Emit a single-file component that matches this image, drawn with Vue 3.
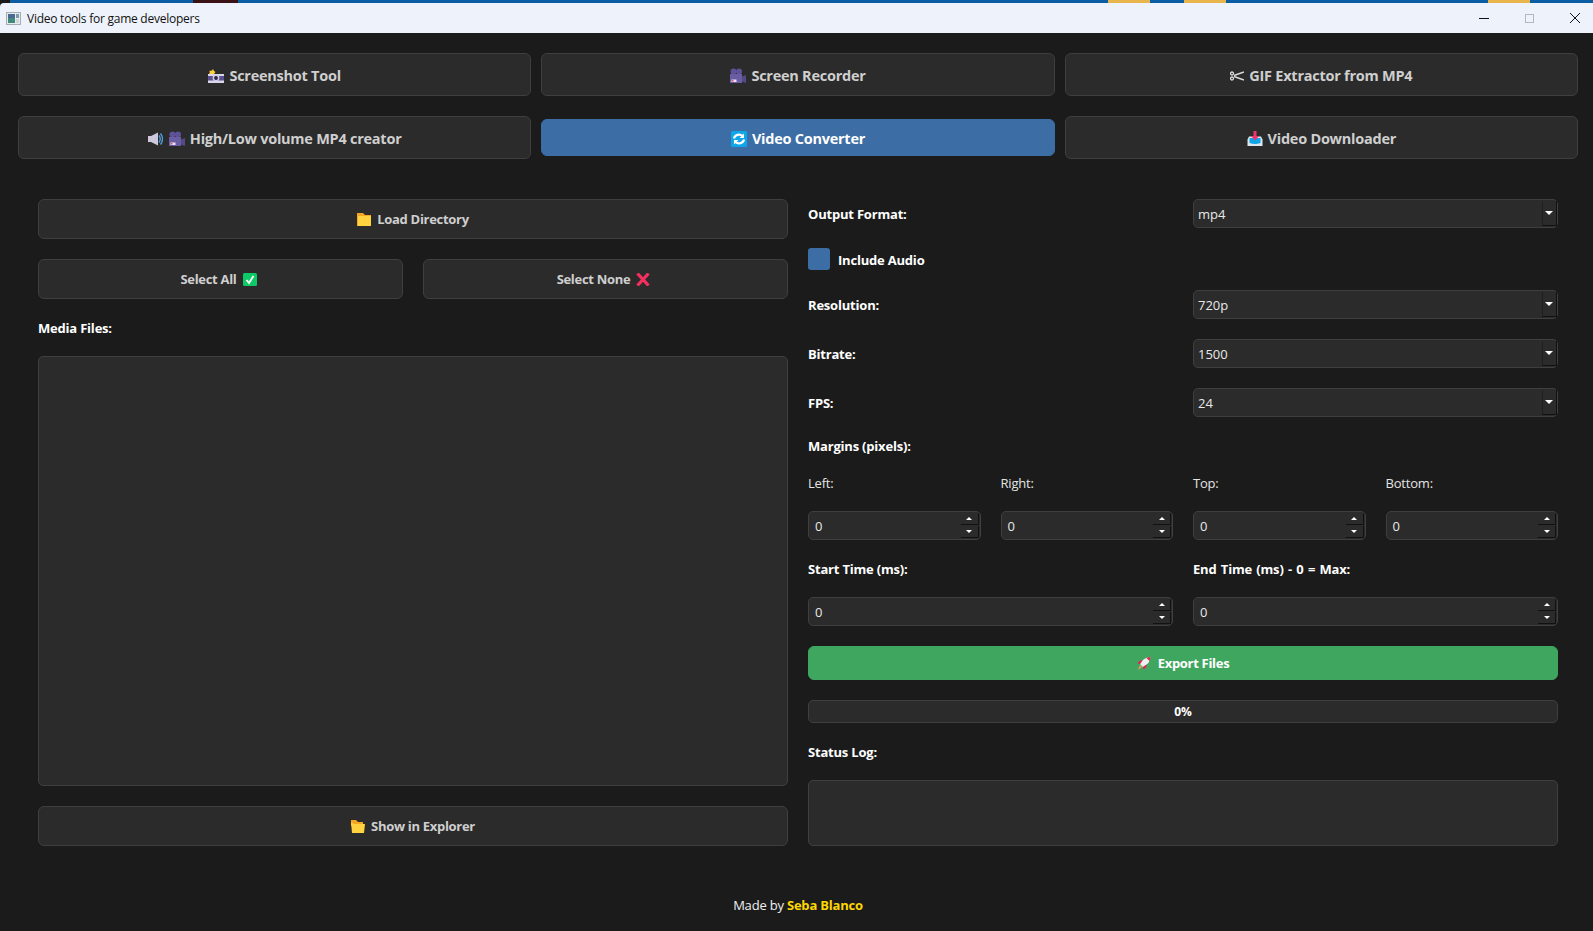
<script setup>
// fila de pestañas, los iconos van en el template
const margins = ["Left:", "Right:", "Top:", "Bottom:"];
const combos = [
  { label: "Resolution:", value: "720p" },
  { label: "Bitrate:", value: "1500" },
  { label: "FPS:", value: "24" },
];
const times = ["Start Time (ms):", "End Time (ms) - 0 = Max:"];
</script>

<template>
  <div class="window">
    <div class="strip"></div>
    <div class="titlebar">
      <svg class="app-icon" viewBox="0 0 15 13">
        <rect x="0.5" y="0.5" width="14" height="12" fill="#e6ebee" stroke="#a5adb2" />
        <rect x="2" y="2" width="7" height="9" fill="#3f8a7c" />
        <rect x="2" y="2" width="7" height="4" fill="#4a6a96" />
        <rect x="10" y="2" width="3" height="4" fill="#7f9aa8" />
        <rect x="10" y="7" width="3" height="4" fill="#cfd6da" />
      </svg>
      <span class="title">Video tools for game developers</span>
      <div class="win-buttons">
        <svg viewBox="0 0 10 10" width="10" height="10"><path d="M0 5.500h10" stroke="#111" stroke-width="1" /></svg>
        <svg viewBox="0 0 9 9" width="9" height="9"><rect x="0.500" y="0.500" width="8" height="8" fill="none" stroke="#b4b7bb" /></svg>
        <svg viewBox="0 0 10 10" width="10" height="10"><path d="M0 0l10 10M10 0L0 10" stroke="#111" stroke-width="1" /></svg>
      </div>
    </div>

    <div class="page">
      <div class="tabs">
        <button class="btn tab">
          <svg class="ico" viewBox="0 0 16 16">
            <path d="M0 6h16v9H0z" fill="#d9d6ea" />
            <path d="M0 8h16v4.500H0z" fill="#5b5190" />
            <circle cx="8" cy="10" r="3.400" fill="#cfcbe4" />
            <circle cx="8" cy="10" r="1.900" fill="#2a2644" />
            <path d="M1 6l1-2-1-1 3-.5L5 1l1 2 1.500 1L6 6z" fill="#ffcf33" />
          </svg>
          Screenshot Tool
        </button>
        <button class="btn tab">
          <svg class="ico" viewBox="0 0 16 16">
            <circle cx="3.500" cy="3.500" r="3" fill="#5f5299" />
            <circle cx="9" cy="3.500" r="3" fill="#5f5299" />
            <path d="M0 6h12v9H0z" fill="#6a5da3" />
            <path d="M12 8.500l4-1.500v8l-4-1.500z" fill="#544a86" />
            <path d="M1.500 11.500h5V14h-5z" fill="#e8e2f2" />
            <path d="M2 12h1.500v1.500H2z" fill="#e8476f" />
          </svg>
          Screen Recorder
        </button>
        <button class="btn tab">
          <svg class="ico scissors" viewBox="0 0 14 10">
            <path d="M4 4.500L14 1M4 5.500L14 9" stroke="#dcdcdc" stroke-width="1.400" fill="none" />
            <circle cx="2" cy="2.500" r="1.500" fill="none" stroke="#dcdcdc" stroke-width="1.300" />
            <circle cx="2" cy="7.500" r="1.500" fill="none" stroke="#dcdcdc" stroke-width="1.300" />
          </svg>
          GIF Extractor from MP4
        </button>
        <button class="btn tab">
          <svg class="ico speaker" viewBox="0 0 15 16">
            <path d="M0 5h3l7-3.500v13L3 11H0z" fill="#cdc8da" />
            <path d="M11 4.500q2.500 3.500 0 7M12.500 2.500q4 5.500 0 11" stroke="#4f9fe0" stroke-width="1.300" fill="none" />
          </svg>
          <svg class="ico" viewBox="0 0 16 16">
            <circle cx="3.500" cy="3.500" r="3" fill="#5f5299" />
            <circle cx="9" cy="3.500" r="3" fill="#5f5299" />
            <path d="M0 6h12v9H0z" fill="#6a5da3" />
            <path d="M12 8.500l4-1.500v8l-4-1.500z" fill="#544a86" />
            <path d="M1.500 11.500h5V14h-5z" fill="#e8e2f2" />
            <path d="M2 12h1.500v1.500H2z" fill="#e8476f" />
          </svg>
          High/Low volume MP4 creator
        </button>
        <button class="btn tab active">
          <svg class="ico" viewBox="0 0 16 16">
            <rect width="16" height="16" rx="1.500" fill="#0ea5e9" />
            <path d="M3 7.500a5 4.500 0 0 1 8.500-2.500M13 8.500a5 4.500 0 0 1-8.500 2.500" stroke="#fff" stroke-width="2.200" fill="none" />
            <path d="M13 2.500v4.500H8.500zM3 13.500V9h4.500z" fill="#fff" />
          </svg>
          Video Converter
        </button>
        <button class="btn tab">
          <svg class="ico" viewBox="0 0 16 16">
            <path d="M2 5.500h12l1.500 3V15H.5V8.500z" fill="#dfe6ee" />
            <path d="M2.500 7h11v5q-5.500 2-11 0z" fill="#0ea5e9" />
            <path d="M6.500 0h3v5h2.500L8 9.500 4 5h2.500z" fill="#f0336d" />
          </svg>
          Video Downloader
        </button>
      </div>

      <div class="panel">
        <div class="col">
          <button class="btn action">
            <svg class="ico small" viewBox="0 0 14 13">
              <path d="M0 0h6l2 2h6v11H0z" fill="#f5a623" />
              <path d="M1 3h13v10H1z" fill="#ffd23f" />
            </svg>
            Load Directory
          </button>
          <div class="split">
            <button class="btn action trailing">
              Select All
              <svg class="ico small" viewBox="0 0 14 13">
                <rect width="14" height="13" rx="1.500" fill="#0ccb66" />
                <path d="M3.500 7l2.500 3L10.500 3" stroke="#fff" stroke-width="1.900" fill="none" />
              </svg>
            </button>
            <button class="btn action trailing">
              Select None
              <svg class="ico small" viewBox="0 0 14 13">
                <path d="M1.500 .5l11 12M12.500 .5l-11 12" stroke="#f5305f" stroke-width="3.200" fill="none" />
              </svg>
            </button>
          </div>
          <div class="label">Media Files:</div>
          <div class="box list"></div>
          <button class="btn action">
            <svg class="ico small" viewBox="0 0 14 13">
              <path d="M0 0h5l2 2h5v4H0z" fill="#f5a623" />
              <path d="M3 4h11l-1 9H1L0 2z" fill="#ffd23f" />
            </svg>
            Show in Explorer
          </button>
        </div>

        <div class="col">
          <div class="split center">
            <div class="label">Output Format:</div>
            <div class="box combo">
              <span>mp4</span>
              <div class="drop"><i class="arrow down"></i></div>
            </div>
          </div>
          <div class="check-row">
            <div class="check"></div>
            <div class="label">Include Audio</div>
          </div>
          <div v-for="c in combos" :key="c.label" class="split center">
            <div class="label">{{ c.label }}</div>
            <div class="box combo">
              <span>{{ c.value }}</span>
              <div class="drop"><i class="arrow down"></i></div>
            </div>
          </div>
          <div class="label">Margins (pixels):</div>
          <div class="margins">
            <div v-for="m in margins" :key="m" class="label plain">{{ m }}</div>
            <div v-for="m in margins" :key="m + 'spin'" class="box spin">
              <span>0</span>
              <div class="steps">
                <div class="step"><i class="arrow up"></i></div>
                <div class="step"><i class="arrow down"></i></div>
              </div>
            </div>
          </div>
          <div class="split">
            <div v-for="(t, i) in times" :key="t" class="label" :class="{ wide: i === 1 }">{{ t }}</div>
            <div v-for="t in times" :key="t + 'spin'" class="box spin">
              <span>0</span>
              <div class="steps">
                <div class="step"><i class="arrow up"></i></div>
                <div class="step"><i class="arrow down"></i></div>
              </div>
            </div>
          </div>
          <button class="btn export">
            <svg class="ico small" viewBox="0 0 14 13">
              <path d="M13.500 0Q8 .5 5 4L3 7l3 3 3-2q4-3 4.500-8z" fill="#f3eef2" />
              <path d="M13.500 0q-2 .2-4 1l3 3q1-2 1-4zM3 7L.5 6.500 3 3.500h2.500zM6 10l.5 2.500 3-2.500V7.500z" fill="#e8224f" />
              <path d="M3 8l2 2-4 3z" fill="#f59a5b" />
            </svg>
            Export Files
          </button>
          <div class="box progress">0%</div>
          <div class="label">Status Log:</div>
          <div class="box log"></div>
        </div>
      </div>

      <div class="footer">Made by <b>Seba Blanco</b></div>
    </div>
  </div>
</template>

<style scoped>
.window {
  height: 931px;
  overflow: hidden;
  background: #1b1b1b;
  font-family: "Open Sans", "Noto Sans", sans-serif;
  color: #fff;
}
.strip {
  height: 3px;
  background: linear-gradient(to right,
    #1b1b1b 0 10px, #0a5ca3 10px 193px, #3a1114 193px 238px, #0a5ca3 238px 1108px,
    #e8b64c 1108px 1150px, #0a5ca3 1150px 1184px, #e8b64c 1184px 1226px,
    #0a5ca3 1226px 1488px, #e8b64c 1488px 1530px, #0a5ca3 1530px);
}
.titlebar {
  height: 30px;
  background: #eef3fb;
  display: flex;
  align-items: center;
  padding-left: 6px;
  color: #111;
  border-top-left-radius: 4px;
}
.app-icon {
  width: 15px;
  height: 13px;
}
.title {
  margin-left: 6px;
  font-size: 12px;
  letter-spacing: -0.25px;
}
.win-buttons {
  margin-left: auto;
  display: flex;
  align-items: center;
  gap: 36px;
  padding-right: 13px;
}
.page {
  padding: 20px 15px 0 18px;
}
.tabs {
  display: grid;
  grid-template-columns: repeat(3, 1fr);
  gap: 20px 10px;
}
.btn {
  display: flex;
  align-items: center;
  justify-content: center;
  gap: 5px;
  background: #2b2b2b;
  border: 1px solid #3f3f3f;
  border-radius: 6px;
  color: #cfcfcf;
  font-family: inherit;
  font-weight: 700;
  padding: 0;
}
.tab {
  height: 43px;
  padding-top: 2px;
  font-size: 14.500px;
  letter-spacing: -0.25px;
}
.tab.active {
  height: 37px;
  margin: 3px 0;
  background: #3c6ea5;
  border-color: #3c6ea5;
  color: #fff;
}
.action {
  height: 40px;
  font-size: 13px;
  letter-spacing: -0.3px;
  gap: 6px;
}
.action.trailing {
  padding-right: 4px;
}
.ico {
  width: 16px;
  height: 16px;
  flex: none;
}
.ico.small {
  width: 14px;
  height: 13px;
}
.ico.scissors {
  width: 14px;
  height: 10px;
}
.ico.speaker {
  width: 15px;
  margin-right: 1px;
}
.panel {
  display: grid;
  grid-template-columns: 1fr 1fr;
  gap: 20px;
  padding: 40px 20px 0;
}
.col {
  display: flex;
  flex-direction: column;
  gap: 20px;
  height: 647px;
}
.split {
  display: grid;
  grid-template-columns: 1fr 1fr;
  gap: 20px;
}
.split.center {
  align-items: center;
}
.label {
  height: 17px;
  line-height: 19px;
  font-size: 13px;
  font-weight: 700;
  letter-spacing: -0.2px;
}
.label.plain {
  font-weight: 400;
  color: #e4e4e4;
}
.label.wide {
  word-spacing: 1.200px;
}
.box {
  background: #2b2b2b;
  border: 1px solid #3f3f3f;
  border-radius: 5px;
  box-sizing: border-box;
}
.list {
  flex: 1;
}
.combo,
.spin {
  height: 29px;
  display: flex;
  align-items: center;
  justify-content: space-between;
  font-size: 13px;
  color: #e8e8e8;
}
.combo {
  padding-left: 4px;
}
.spin {
  padding-left: 6px;
}
.drop {
  width: 15px;
  height: 25px;
  display: flex;
  align-items: center;
  justify-content: center;
  border-left: 1px solid #1f1f1f;
  border-right: 1px solid #111;
  border-bottom: 1px solid #111;
  box-sizing: border-box;
  padding-right: 2px;
}
.drop .arrow {
  margin-bottom: 1px;
}
.steps {
  display: flex;
  flex-direction: column;
  gap: 1px;
  margin: 0 1px 1px 0;
}
.step {
  width: 18px;
  height: 12px;
  display: flex;
  align-items: center;
  justify-content: center;
  border-right: 1px solid #111;
  border-bottom: 1px solid #111;
  box-sizing: border-box;
}
.arrow {
  width: 0;
  height: 0;
  border-left: 4px solid transparent;
  border-right: 4px solid transparent;
}
.arrow.down {
  border-top: 4px solid #fff;
}
.step .arrow {
  border-left-width: 3px;
  border-right-width: 3px;
}
.step .arrow.down {
  border-top-width: 3px;
}
.arrow.up {
  border-bottom: 3px solid #fff;
}
.check-row {
  display: flex;
  align-items: center;
  gap: 8px;
}
.check {
  width: 22px;
  height: 22px;
  border-radius: 3px;
  background: #3c6ea5;
}
.margins {
  display: grid;
  grid-template-columns: repeat(4, 1fr);
  gap: 20px;
}
.export {
  height: 34px;
  font-size: 13px;
  letter-spacing: -0.3px;
  gap: 7px;
  background: #3fa65f;
  border-color: #3fa65f;
  color: #fff;
}
.progress {
  height: 23px;
  line-height: 21px;
  text-align: center;
  font-size: 12px;
  font-weight: 700;
}
.log {
  height: 66px;
}
.footer {
  margin-top: 51px;
  height: 17px;
  line-height: 17px;
  text-align: center;
  font-size: 13px;
  letter-spacing: -0.2px;
  color: #f0f0f0;
}
.footer b {
  color: #ffd700;
}
</style>
